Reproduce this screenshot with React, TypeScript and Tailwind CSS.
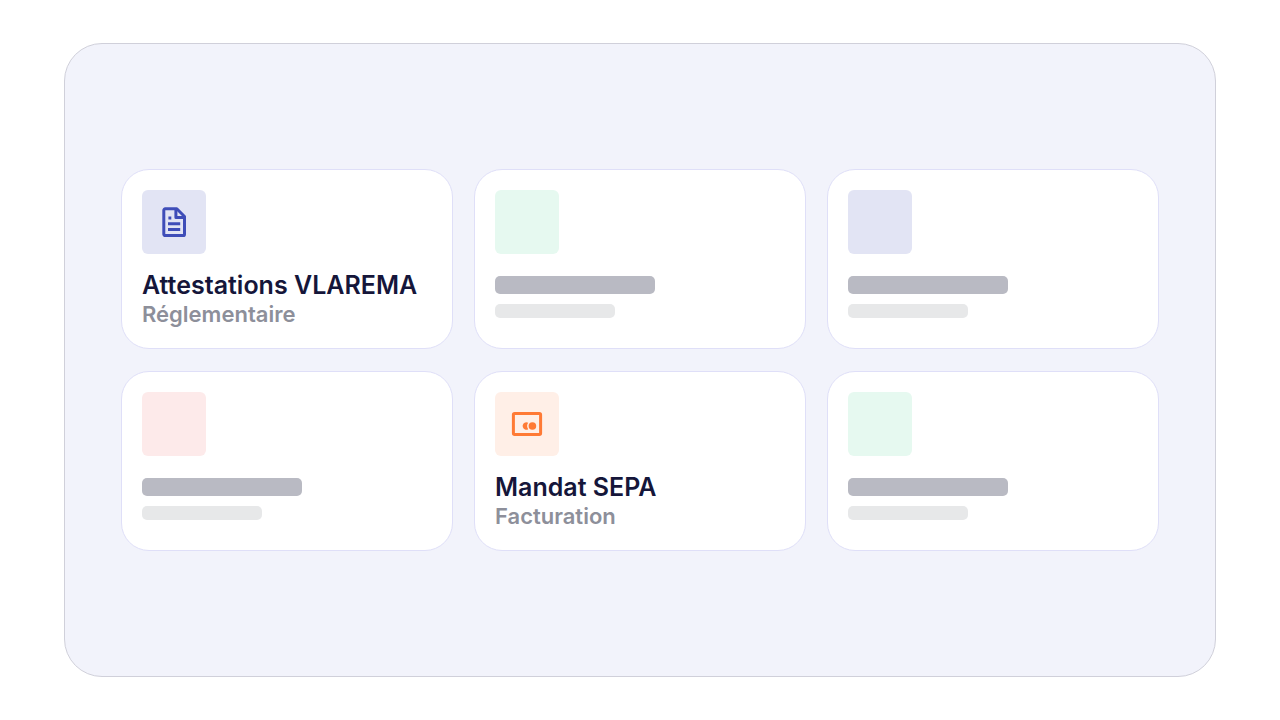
import React from 'react';

interface DocumentCard {
  id: string;
  tile: string;
  title?: string;
  category?: string;
  icon?: React.ReactNode;
}

const FileIcon: React.FC = () => (
  <svg className="size-8" viewBox="0 0 32 32" fill="none" stroke="#3f4db8" strokeWidth="3" aria-hidden="true">
    <path strokeLinejoin="round" d="M18.8 2.8H7.2a1.4 1.4 0 0 0-1.4 1.4v24a1.4 1.4 0 0 0 1.4 1.4h17.9a1.4 1.4 0 0 0 1.4-1.4V10.5z" />
    <path strokeLinejoin="round" d="M17.9 3v8.4h8.4" />
    <path d="M10.4 11.9h2.9M10 17.7h12.2M10 23.4h12.2" />
  </svg>
);

const PaymentIcon: React.FC = () => (
  <svg className="size-8" viewBox="0 0 32 32" fill="none" aria-hidden="true">
    <rect x="2.4" y="5.4" width="27.2" height="21" rx="1.2" stroke="#ff7a35" strokeWidth="3" />
    <circle cx="21.4" cy="18" r="3.8" fill="#ff7a35" />
    <path fill="#ff7a35" d="M15.2 14.3c.7 0 1.4.2 2 .5a5.6 5.6 0 0 0 0 6.4 3.7 3.7 0 1 1-2-6.9z" />
  </svg>
);

const cards: DocumentCard[] = [
  {
    id: 'vlarema',
    tile: 'bg-[#e2e4f4]',
    title: 'Attestations VLAREMA',
    category: 'Réglementaire',
    icon: <FileIcon />,
  },
  { id: 'green-top', tile: 'bg-[#e6f9f0]' },
  { id: 'indigo', tile: 'bg-[#e2e4f4]' },
  { id: 'red', tile: 'bg-[#fdeaea]' },
  {
    id: 'sepa',
    tile: 'bg-[#ffefe7]',
    title: 'Mandat SEPA',
    category: 'Facturation',
    icon: <PaymentIcon />,
  },
  { id: 'green-bottom', tile: 'bg-[#e6f9f0]' },
];

const Card: React.FC<{ card: DocumentCard }> = ({ card }) => (
  <article className="rounded-[28px] border border-[#dfdff8] bg-white p-5">
    <div className={`mb-4 flex size-16 items-center justify-center rounded-md ${card.tile}`}>
      {card.icon}
    </div>
    {card.title ? (
      <>
        <h2 className="whitespace-nowrap text-[25px] leading-[30px] font-semibold text-[#15163a]">
          {card.title}
        </h2>
        <p className="text-[22px] leading-7 font-semibold text-[#8d8f9a]">{card.category}</p>
      </>
    ) : (
      <>
        <div className="flex h-[30px] items-center">
          <div className="h-[18px] w-40 rounded-[5px] bg-[#b9bac3]" />
        </div>
        <div className="h-7 pt-1">
          <div className="h-3.5 w-[120px] rounded-[5px] bg-[#e7e8e9]" />
        </div>
      </>
    )}
  </article>
);

const App: React.FC = () => {
  return (
    <main className="flex min-h-screen flex-col bg-white px-[5%] py-[43px] font-['Inter',sans-serif]">
      <section className="flex flex-1 flex-col justify-center rounded-[38px] border border-[#d0d0da] bg-[#f2f3fb] px-14 py-8">
        <div className="grid grid-cols-3 gap-x-[21px] gap-y-[22px]">
          {cards.map((card) => (
            <Card key={card.id} card={card} />
          ))}
        </div>
      </section>
    </main>
  );
};

export default App;
